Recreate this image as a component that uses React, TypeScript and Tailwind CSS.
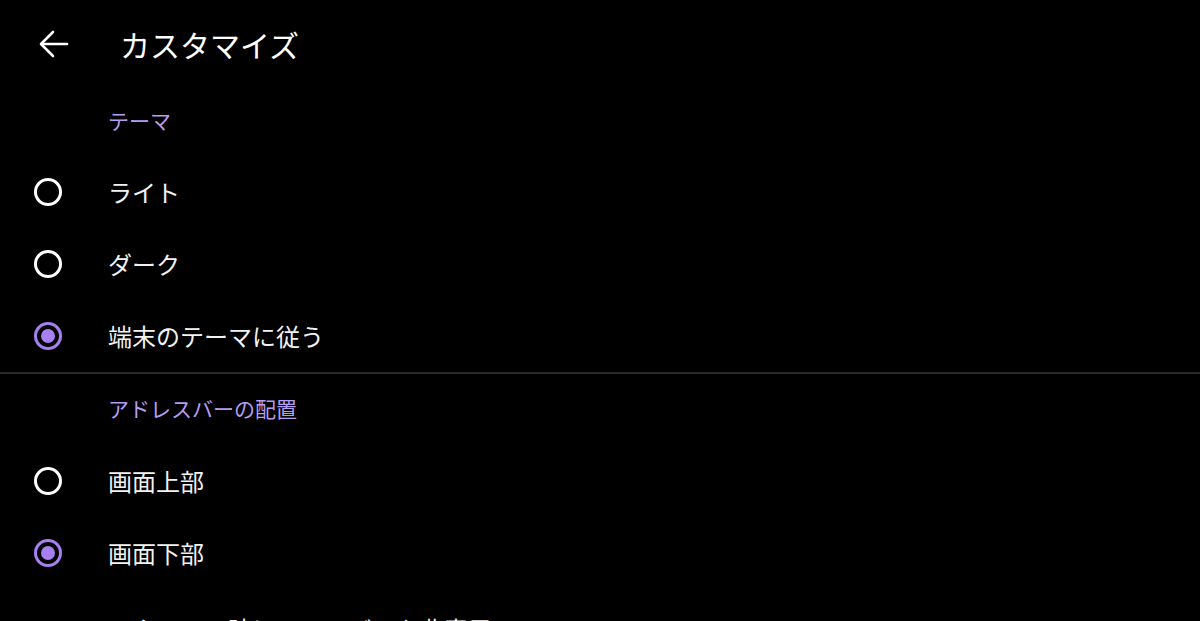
import { useState } from 'react'

const font = { fontFamily: '"Noto Sans CJK JP", "Noto Sans", sans-serif' }

function Radio({ checked }: { checked: boolean }) {
  return (
    <span
      className={`w-[28px] h-[28px] rounded-full border-[3px] flex items-center justify-center ${
        checked ? 'border-[#a87ff0]' : 'border-white'
      }`}
    >
      {checked && <span className="w-[14px] h-[14px] rounded-full bg-[#a87ff0]" />}
    </span>
  )
}

function Option({ label, checked, onClick }: { label: string; checked: boolean; onClick: () => void }) {
  return (
    <div onClick={onClick} className="h-[72px] flex items-center cursor-pointer">
      <div className="w-[96px] pl-[34px] flex items-center">
        <Radio checked={checked} />
      </div>
      <span className="ml-[12px] text-[24px] leading-none text-[#f2f2f2]">{label}</span>
    </div>
  )
}

export default function App() {
  const [theme, setTheme] = useState(2)
  const [bar, setBar] = useState(1)

  const themes = ['ライト', 'ダーク', '端末のテーマに従う']
  const bars = ['画面上部', '画面下部']

  return (
    <div className="w-[1200px] h-[621px] bg-black overflow-hidden" style={font}>
      {/* Header */}
      <div className="h-[88px] flex items-center">
        <button className="ml-[39px] w-[30px] h-[28px] flex items-center justify-center">
          <svg width="30" height="28" viewBox="0 0 30 28" fill="none" stroke="white" strokeWidth="2.6" strokeLinecap="round" strokeLinejoin="round">
            <path d="M28 14H3" />
            <path d="M14 2L2 14l12 12" />
          </svg>
        </button>
        <h1 className="ml-[51px] text-[30px] leading-none text-white">カスタマイズ</h1>
      </div>

      {/* Theme */}
      <div className="pl-[108px] pt-[19px] pb-[22px] text-[21px] leading-[27px] text-[#b69cf2]">テーマ</div>
      {themes.map((t, i) => (
        <Option key={t} label={t} checked={theme === i} onClick={() => setTheme(i)} />
      ))}

      <div className="h-[2px] bg-[#2a2a2a]" />

      {/* Address bar */}
      <div className="pl-[108px] pt-[21px] pb-[23px] text-[21px] leading-[27px] text-[#b69cf2]">アドレスバーの配置</div>
      {bars.map((b, i) => (
        <Option key={b} label={b} checked={bar === i} onClick={() => setBar(i)} />
      ))}

      <div className="pt-[28px] pl-[108px]">
        <span className="text-[24px] leading-none text-[#f2f2f2]">スクロール時にツールバーを非表示</span>
      </div>
    </div>
  )
}
